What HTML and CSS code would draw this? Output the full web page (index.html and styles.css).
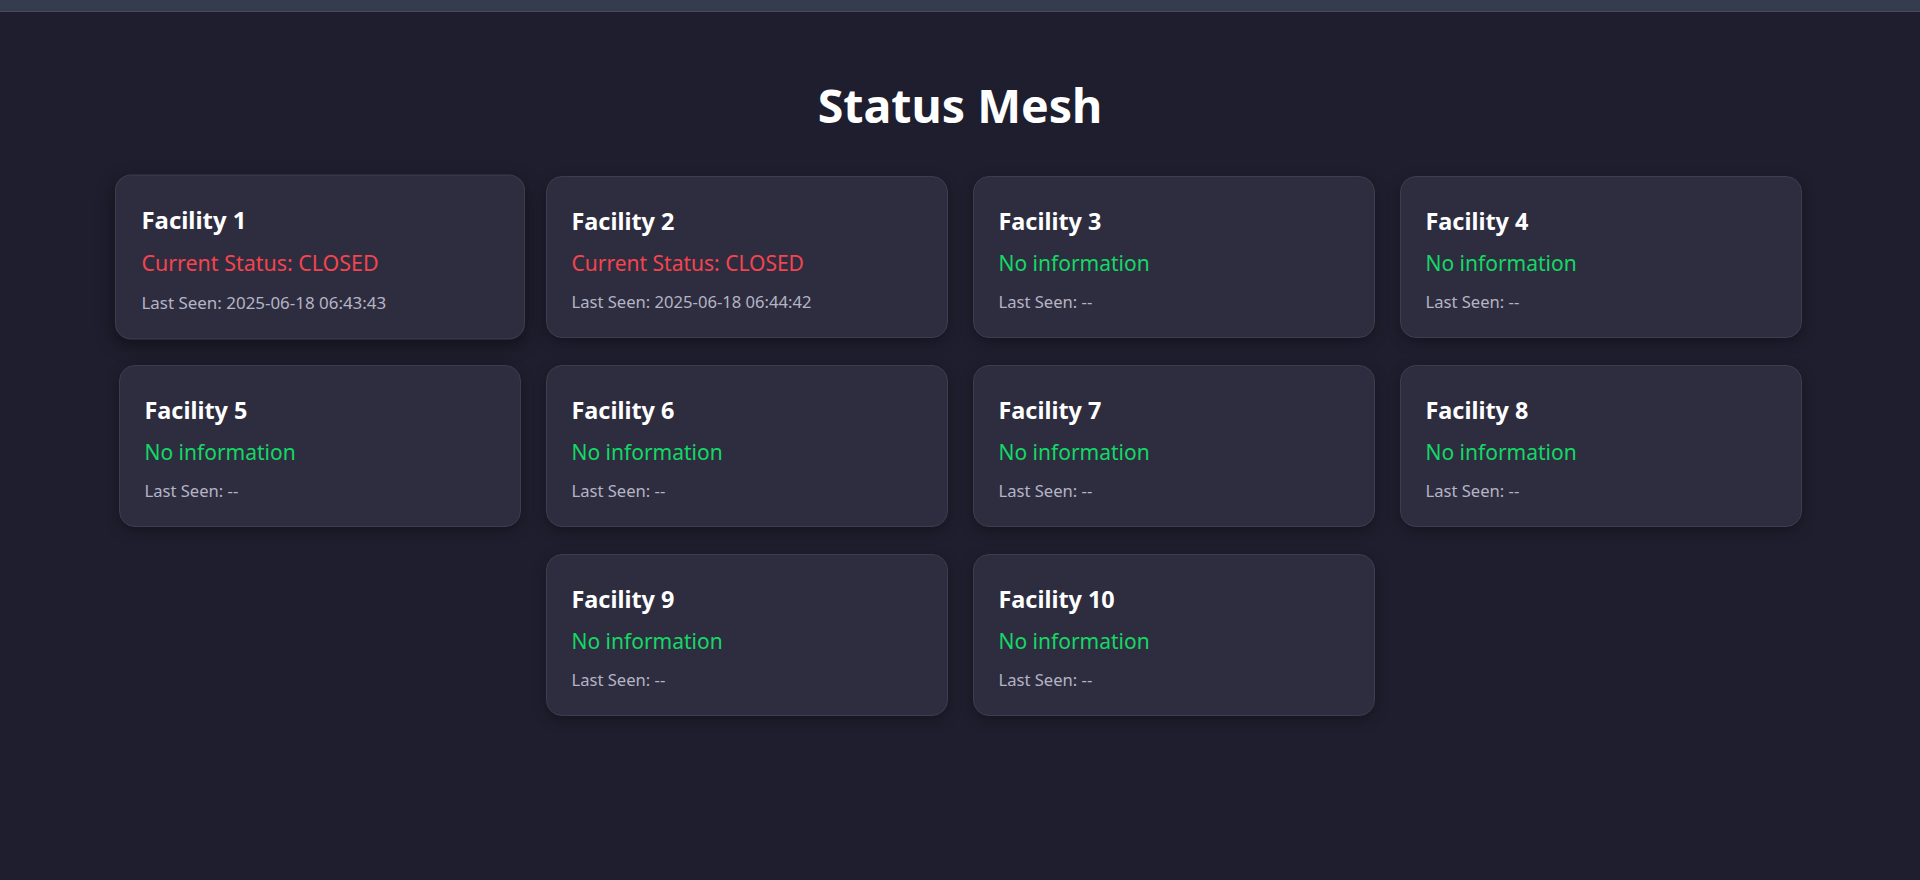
FILE: index.html
```html
<!DOCTYPE html>
<html lang="en">
<head>
  <meta charset="UTF-8" />
  <meta name="viewport" content="width=device-width, initial-scale=1.0"/>
  <title>Status Mesh</title>
  <link rel="stylesheet" href="styles.css">
</head>
<body>

  <div class="topbar"></div>

  <main>
    <h1>Status Mesh</h1>

    <div class="mesh">
      <div class="card hover">
        <h3>Facility 1</h3>
        <p class="status closed">Current Status: CLOSED</p>
        <p class="seen">Last Seen: 2025-06-18 06:43:43</p>
      </div>
      <div class="card">
        <h3>Facility 2</h3>
        <p class="status closed">Current Status: CLOSED</p>
        <p class="seen">Last Seen: 2025-06-18 06:44:42</p>
      </div>
      <div class="card">
        <h3>Facility 3</h3>
        <p class="status none">No information</p>
        <p class="seen">Last Seen: --</p>
      </div>
      <div class="card">
        <h3>Facility 4</h3>
        <p class="status none">No information</p>
        <p class="seen">Last Seen: --</p>
      </div>
      <div class="card">
        <h3>Facility 5</h3>
        <p class="status none">No information</p>
        <p class="seen">Last Seen: --</p>
      </div>
      <div class="card">
        <h3>Facility 6</h3>
        <p class="status none">No information</p>
        <p class="seen">Last Seen: --</p>
      </div>
      <div class="card">
        <h3>Facility 7</h3>
        <p class="status none">No information</p>
        <p class="seen">Last Seen: --</p>
      </div>
      <div class="card">
        <h3>Facility 8</h3>
        <p class="status none">No information</p>
        <p class="seen">Last Seen: --</p>
      </div>
      <div class="card">
        <h3>Facility 9</h3>
        <p class="status none">No information</p>
        <p class="seen">Last Seen: --</p>
      </div>
      <div class="card">
        <h3>Facility 10</h3>
        <p class="status none">No information</p>
        <p class="seen">Last Seen: --</p>
      </div>
    </div>
  </main>

</body>
</html>
```

FILE: styles.css
```css
body {
  font-family: 'Segoe UI', 'Noto Sans', 'Open Sans', sans-serif;
  background: #1e1e2e;
  color: #ffffff;
  margin: 0;
  padding: 0;
}
.topbar {
  height: 11px;
  background: #343c4e;
  border-bottom: 1px solid #454c5c;
}
main {
  padding: 0 20px 40px;
}
h1 {
  text-align: center;
  font-size: 46.5px;
  font-weight: 700;
  margin: 66px 0 42px;
  line-height: 1.2;
}
.mesh {
  display: flex;
  flex-wrap: wrap;
  justify-content: center;
  gap: 27px 25px;
}
.card {
  box-sizing: border-box;
  width: 402px;
  height: 162px;
  background: #2e2d40;
  border: 1px solid #3d3d50;
  border-radius: 16px;
  padding: 29px 25px 20px;
  box-shadow: 0 4px 14px rgba(0,0,0,0.3);
  transition: transform 0.2s;
}
.card.hover {
  transform: scale(1.02);
  box-shadow: 0 6px 18px rgba(0,0,0,0.4);
}
h3 {
  font-size: 23.4px;
  margin: 0 0 14px;
  line-height: 1.3;
}
.status {
  font-size: 21px;
  margin: 0 0 13px;
  line-height: 1.3;
}
.closed {
  color: #f4444e;
}
.none {
  color: #14d865;
}
.seen {
  font-size: 16.6px;
  color: #b4b4c4;
  margin: 0;
  line-height: 1.3;
}
```
